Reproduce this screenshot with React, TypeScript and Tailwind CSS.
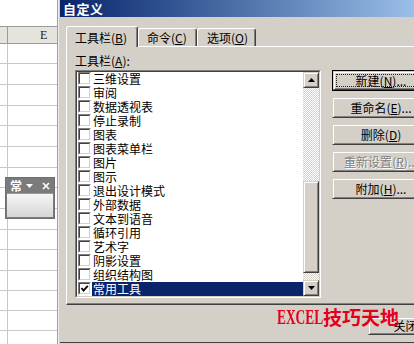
import React from "react";

const raised =
  "border border-t-[#d4d0c8] border-l-[#d4d0c8] border-b-[#404040] border-r-[#404040] shadow-[inset_1px_1px_0_#ffffff,inset_-1px_-1px_0_#808080]";

const items = [
  "三维设置",
  "审阅",
  "数据透视表",
  "停止录制",
  "图表",
  "图表菜单栏",
  "图片",
  "图示",
  "退出设计模式",
  "外部数据",
  "文本到语音",
  "循环引用",
  "艺术字",
  "阴影设置",
  "组织结构图",
  "常用工具",
];

const rowHeights = [20, 21, 21, 20, 21, 21, 20, 21, 21, 20, 21, 20, 20, 20, 20];

function Acc({ pre, k, post }: { pre: string; k: string; post: string }) {
  return (
    <span className="whitespace-nowrap">
      {pre}(<span className="underline underline-offset-1">{k}</span>){post}
    </span>
  );
}

function Sheet() {
  return (
    <div className="relative w-[57px] shrink-0 flex flex-col bg-white">
      <div className="h-[27px] shrink-0 border-b border-[#9a9a9a] bg-white" />
      <div className="h-[17px] shrink-0 flex bg-[#e6e3dc] border-b border-[#9a9a9a]">
        <div className="w-[8px] border-r border-[#9a9a9a]" />
        <div className="flex-1 pl-[32px] text-[12px] leading-[16px] font-['Liberation_Serif',serif] text-[#222]">
          E
        </div>
      </div>
      {rowHeights.map((h, i) => (
        <div
          key={i}
          className="shrink-0 flex border-b border-[#c8c8c8]"
          style={{ height: h }}
        >
          <div className="w-[8px] border-r border-[#c8c8c8]" />
          <div className="flex-1" />
        </div>
      ))}
      <div className="absolute left-[5px] top-[177px] w-[50px] h-[42px] border border-[#6f6f6f] bg-[#7b7b7b] flex flex-col">
        <div className="h-[15px] flex items-center px-[4px] gap-[4px] text-white">
          <span className="text-[12px] leading-[14px] font-bold">常</span>
          <svg width="7" height="5" viewBox="0 0 7 5" className="mt-[1px]">
            <path d="M0 0 H7 L3.5 4 Z" fill="#ffffff" />
          </svg>
          <svg width="8" height="8" viewBox="0 0 8 8" className="ml-[5px]">
            <path d="M1 1 L7 7 M7 1 L1 7" stroke="#ffffff" strokeWidth="1.6" />
          </svg>
        </div>
        <div className="flex-1 mx-[1px] mb-[1px] border-t border-[#9a9a9a] bg-linear-to-b from-[#f6f6f6] to-[#d6d6d6]" />
      </div>
    </div>
  );
}

function CheckBox({ checked }: { checked?: boolean }) {
  return (
    <div className="w-[13px] h-[13px] shrink-0 border border-t-[#808080] border-l-[#808080] border-b-white border-r-white">
      <div className="w-full h-full bg-white border border-t-[#404040] border-l-[#404040] border-b-[#d4d0c8] border-r-[#d4d0c8] flex items-center justify-center">
        {checked && (
          <svg width="9" height="9" viewBox="0 0 9 9">
            <path d="M1.5 4 L3.5 6.5 L7.8 1.8" stroke="#000" strokeWidth="1.8" fill="none" />
          </svg>
        )}
      </div>
    </div>
  );
}

function ScrollBar() {
  const hatch =
    "bg-[image:repeating-conic-gradient(#ffffff_0%_25%,#d4d0c8_0%_50%)] bg-[length:2px_2px]";
  return (
    <div className="w-[16px] shrink-0 flex flex-col">
      <div className={`h-[16px] shrink-0 bg-[#d4d0c8] flex items-center justify-center ${raised}`}>
        <svg width="7" height="4" viewBox="0 0 7 4">
          <path d="M3.5 0 L7 4 H0 Z" fill="#000" />
        </svg>
      </div>
      <div className={`h-[93px] shrink-0 ${hatch}`} />
      <div className={`h-[92px] shrink-0 bg-[#d4d0c8] ${raised}`} />
      <div className={`flex-1 ${hatch}`} />
      <div className={`h-[16px] shrink-0 bg-[#d4d0c8] flex items-center justify-center ${raised}`}>
        <svg width="7" height="4" viewBox="0 0 7 4">
          <path d="M0 0 H7 L3.5 4 Z" fill="#000" />
        </svg>
      </div>
    </div>
  );
}

function ListBox() {
  return (
    <div className="w-[246px] h-[228px] shrink-0 border border-t-[#808080] border-l-[#808080] border-b-white border-r-white">
      <div className="w-full h-full border border-t-[#404040] border-l-[#404040] border-b-[#d4d0c8] border-r-[#d4d0c8] bg-white flex">
        <div className="flex-1 flex flex-col">
          {items.map((t, i) => {
            const sel = i === items.length - 1;
            return (
              <div key={t} className="h-[14px] flex items-start pl-[1px]">
                <CheckBox checked={sel} />
                <div
                  className={`flex-1 ml-[1px] pl-[1px] text-[12px] leading-[14px] h-[14px] whitespace-nowrap ${
                    sel ? "bg-[#0a246a] text-white" : "text-black"
                  }`}
                >
                  {t}
                </div>
              </div>
            );
          })}
        </div>
        <ScrollBar />
      </div>
    </div>
  );
}

function SideButton({
  children,
  def,
  disabled,
}: {
  children: React.ReactNode;
  def?: boolean;
  disabled?: boolean;
}) {
  if (def) {
    return (
      <div className="w-[98px] h-[21px] border border-black">
        <div className={`w-full h-full bg-[#d4d0c8] ${raised} p-[2px]`}>
          <div className="w-full h-full border border-dotted border-[#222] flex items-center justify-center text-[12px] leading-[14px] text-black">
            {children}
          </div>
        </div>
      </div>
    );
  }
  return (
    <div
      className={`w-[98px] h-[21px] bg-[#d4d0c8] ${raised} flex items-center justify-center text-[12px] leading-[14px] ${
        disabled ? "text-[#808080] [text-shadow:1px_1px_0_#ffffff]" : "text-black"
      }`}
    >
      {children}
    </div>
  );
}

function Dialog() {
  return (
    <div className="w-[380px] h-[344px] shrink-0 border-l border-[#a0a0a0] bg-[#d4d0c8]">
      <div className="h-[344px] border-l border-[#ececec] pl-[1px] flex flex-col">
        <div className="h-[17px] shrink-0 bg-linear-to-r from-[#0a246a] to-[#a6caf0] flex items-center pl-[3px]">
          <span className="text-white font-bold text-[13px] leading-[16px] tracking-[0.5px]">
            自定义
          </span>
        </div>
        <div className="pl-[6px] pt-[9px] shrink-0">
          <div className="flex items-end h-[20px]">
            <div className="relative z-10 -mb-[1px] w-[72px] h-[21px] bg-[#d4d0c8] border-t border-l border-white border-r border-r-[#404040] rounded-t-[3px] shadow-[inset_-1px_0_0_#808080] pl-[8px] pt-[4px] text-[12px] leading-[14px]">
              <Acc pre="工具栏" k="B" post="" />
            </div>
            <div className="w-[59px] h-[18px] border-t border-l border-white border-r border-r-[#404040] rounded-t-[3px] shadow-[inset_-1px_0_0_#808080] pl-[8px] pt-[2px] text-[12px] leading-[14px]">
              <Acc pre="命令" k="C" post="" />
            </div>
            <div className="w-[59px] h-[18px] border-t border-l border-white border-r border-r-[#404040] rounded-t-[3px] shadow-[inset_-1px_0_0_#808080] pl-[9px] pt-[2px] text-[12px] leading-[14px]">
              <Acc pre="选项" k="O" post="" />
            </div>
          </div>
          <div className="w-[370px] h-[259px] border-t border-l border-white border-b border-b-[#404040] shadow-[inset_0_-1px_0_#808080] pl-[8px] pt-[7px]">
            <div className="h-[14px] mb-[2px] text-[12px] leading-[14px]">
              <Acc pre="工具栏" k="A" post=":" />
            </div>
            <div className="flex">
              <ListBox />
              <div className="ml-[11px] flex flex-col gap-[6px]">
                <SideButton def>
                  <Acc pre="新建" k="N" post="..." />
                </SideButton>
                <SideButton>
                  <Acc pre="重命名" k="E" post="..." />
                </SideButton>
                <SideButton>
                  <Acc pre="删除" k="D" post="" />
                </SideButton>
                <SideButton disabled>
                  <Acc pre="重新设置" k="R" post="..." />
                </SideButton>
                <SideButton>
                  <Acc pre="附加" k="H" post="..." />
                </SideButton>
              </div>
            </div>
          </div>
          <div className="h-[37px] pl-[302px] pt-[12px]">
            <div className={`w-[75px] h-[18px] bg-[#d4d0c8] ${raised} flex items-center justify-center text-[12px] leading-[14px]`}>
              关闭
            </div>
          </div>
        </div>
        <div className="h-[1px] bg-[#404040]" />
      </div>
    </div>
  );
}

export default function App() {
  return (
    <div className="relative w-[414px] h-[344px] overflow-hidden flex bg-white text-black font-['Noto_Sans_CJK_SC','Liberation_Sans',sans-serif]">
      <Sheet />
      <Dialog />
      <div className="absolute left-[277px] top-[306px] flex items-center text-[#e3001b] font-bold whitespace-nowrap">
        <span className="inline-block w-[46px] origin-left scale-x-[0.67] text-[20px] leading-[22px] font-['Liberation_Serif',serif]">
          EXCEL
        </span>
        <span className="text-[19px] leading-[22px] font-['Noto_Sans_CJK_SC',sans-serif]">
          技巧天地
        </span>
      </div>
    </div>
  );
}
